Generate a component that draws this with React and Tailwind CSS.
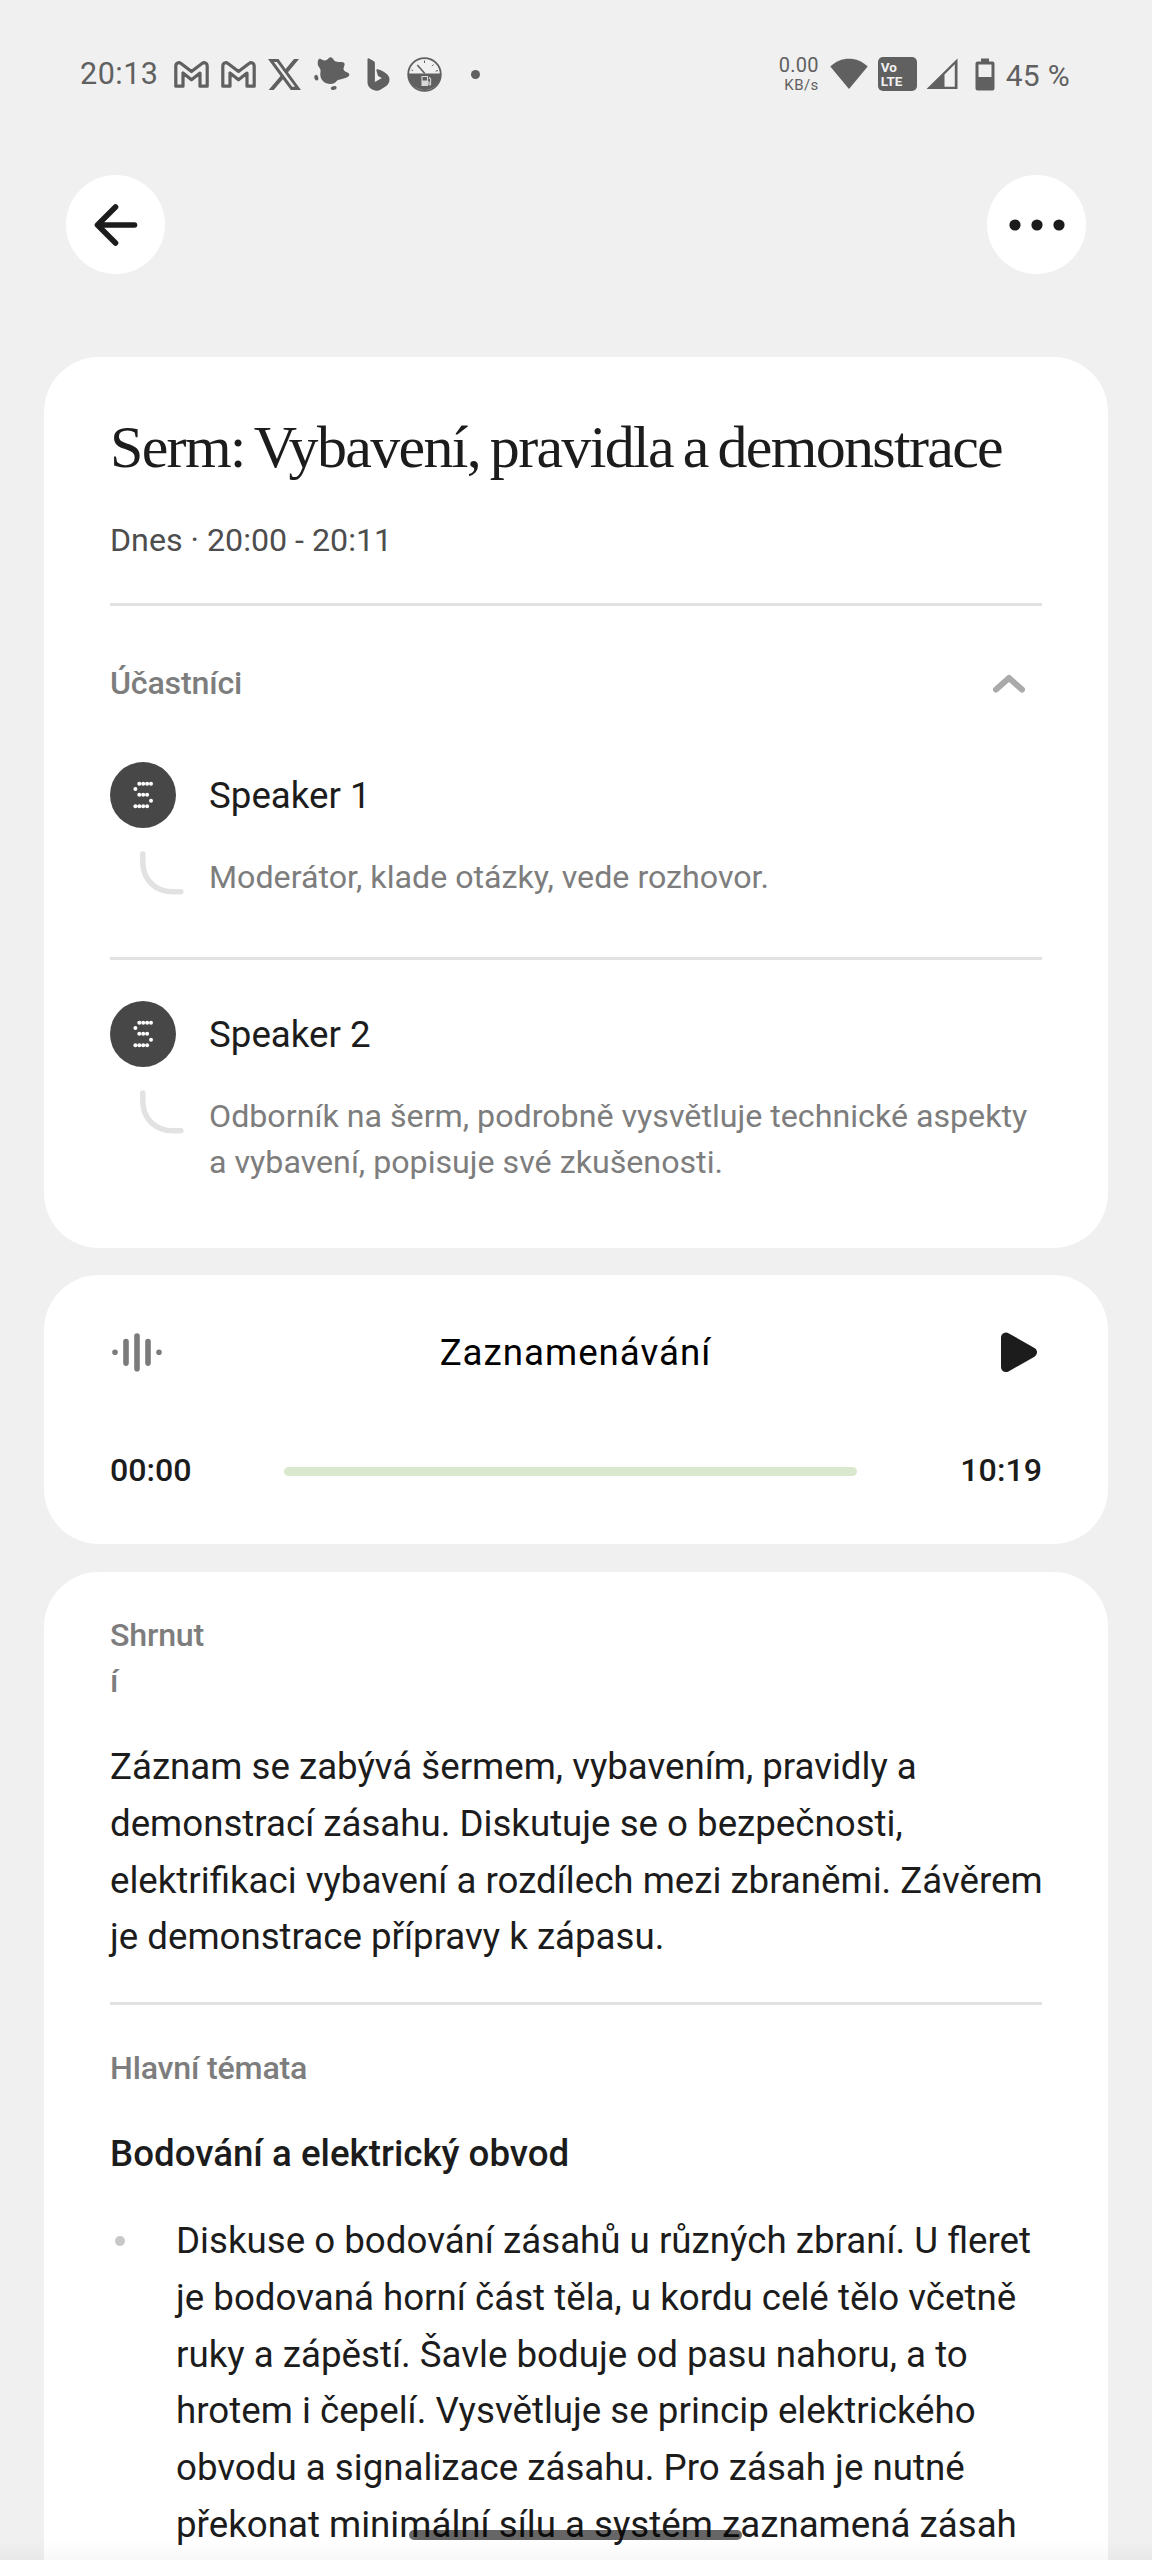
import clsx from 'clsx';

const SPEAKERS = [
  { name: 'Speaker 1', role: 'Moderátor, klade otázky, vede rozhovor.' },
  {
    name: 'Speaker 2',
    role: 'Odborník na šerm, podrobně vysvětluje technické aspekty a vybavení, popisuje své zkušenosti.'
  }
];

// Dot-matrix "S" shown inside the avatar
const AVATAR_DOTS = [
  [29.3, 21.7], [33.2, 21.7], [37.1, 21.7], [41, 21.7],
  [25.4, 27],
  [29.3, 32.7], [33.2, 32.7], [37.1, 32.7],
  [41, 38.7],
  [25.4, 44.3], [29.3, 44.3], [33.2, 44.3], [37.1, 44.3]
];

function GmailIcon({ className }) {
  return (
    <svg viewBox="0 0 35 27" className={clsx('h-[27px] w-[35px]', className)} fill="none" stroke="currentColor" strokeWidth="3.2" strokeLinejoin="round">
      <path d="M1.8 25.2V5.2C1.8 1.8 5 .9 7 2.6l10.5 8 10.5-8c2-1.7 5.2-.8 5.2 2.6v20H26V12l-8.5 6.8L9 12v13.2Z" />
    </svg>
  );
}

function XIcon({ className }) {
  return (
    <svg viewBox="0 1.15 24 21.7" preserveAspectRatio="none" className={clsx('h-[31px] w-[33px]', className)} fill="currentColor">
      <path d="M18.901 1.153h3.68l-8.04 9.19L24 22.846h-7.406l-5.8-7.584-6.638 7.584H.474l8.6-9.83L0 1.154h7.594l5.243 6.932ZM17.61 20.644h2.039L6.486 3.24H4.298Z" />
    </svg>
  );
}

function SplatIcon({ className }) {
  return (
    <svg viewBox="0 0 36 34" className={clsx('h-[34px] w-9', className)} fill="currentColor">
      <path d="M5.3 1.8C6.5 1.2 9 3.4 11 3.6 13 3.8 14.6.2 16.6.3c2.2.1 2.8 3.2 5 4.2 2.4 1 7.2-.4 8.6 1.4 1.4 1.9-1.2 4.6-.5 6.8.8 2.3 5.9 2.8 5.7 5-.2 2.4-4.8 3.4-7.5 4.2-2.4.8-4.2.7-5.2 2.1-1.4 2-3.5 3-6.2 3C10.5 27 6.3 22.8 6.3 17.5c0-2.3.5-3 .2-4.5C6.1 10.8 3.9 9.5 3.7 7 3.6 5 4 2.5 5.3 1.8Z" />
      <ellipse cx="2.3" cy="20.7" rx="1.9" ry="2.9" transform="rotate(-15 2.3 20.7)" />
      <ellipse cx="19.7" cy="31" rx="3" ry="1.9" transform="rotate(-15 19.7 31)" />
    </svg>
  );
}

function BingIcon({ className }) {
  return (
    <svg viewBox="0 0 23 33" className={clsx('h-[33px] w-[23px]', className)} fill="currentColor">
      <path d="M.5 1.3C.5.3 1.3.1 2 .5l4.6 2.6c.9.5 1.3 1.2 1.3 2.2v18.6l7-3.9-3-1.5c-.7-.4-1-.9-1.2-1.6l-1.3-4.3c-.3-1 .3-1.6 1.3-1.3C17.5 13.4 22.5 17 22.5 21.6c0 3.2-1.5 5.4-4 7l-4.7 3c-2.4 1.4-4.9 1.5-7.4.5C2.7 30.6.5 28 .5 24.5Z" />
    </svg>
  );
}

function GaugeIcon({ className }) {
  return (
    <svg viewBox="0 0 35 35" className={clsx('size-[35px]', className)} fill="none" stroke="currentColor">
      <circle cx="17.5" cy="17.5" r="16.3" strokeWidth="1.8" />
      <path d="M1.2 16.6h32.6a16.3 16.3 0 0 1-32.6 0Z" fill="currentColor" stroke="none" />
      <path d="M17.8 16.5 10.3 8" strokeWidth="1.6" />
      <path d="M17.5 3.5V6M26.5 7.5l-1.4 1.6M31 13.5l-2.3.7M4.5 13l1.6.6" strokeWidth="1" />
      <path d="M15 19.5h5.5v9H15zM22 20.5l1.6 1.6v5.2c0 1-1.6 1-1.6 0V25h-1.5" stroke="#d9d9d9" strokeWidth="1.1" />
      <path d="M15 23.5h5.5v5H15z" fill="#d9d9d9" stroke="none" />
    </svg>
  );
}

function StatusBar() {
  return (
    <div className="flex h-[148px] items-center justify-between pr-[82px] pl-[80px] text-[#606060]">
      <div className="flex items-center">
        <span className="w-[94px] text-[30.5px] leading-[36px] tracking-[0.5px]">20:13</span>
        <GmailIcon />
        <GmailIcon className="ml-3" />
        <XIcon className="ml-3" />
        <SplatIcon className="ml-[13px]" />
        <BingIcon className="ml-[17px]" />
        <GaugeIcon className="ml-[17px]" />
        <span className="ml-[29px] size-[9px] rounded-full bg-[#606060]" />
      </div>
      <div className="flex items-center">
        <div className="flex flex-col items-end">
          <span className="text-[20px] leading-[22px] tracking-[0.2px]">0.00</span>
          <span className="text-[15px] leading-[18px] tracking-[0.4px]">KB/s</span>
        </div>
        <svg viewBox="0 0 38 32" className="ml-[11px] h-8 w-[38px]" fill="currentColor">
          <path d="M.3 8.5C5.5 3.3 12 .7 19 .7s13.5 2.6 18.7 7.8L19 31Z" />
        </svg>
        <div className="ml-[10px] flex h-[34px] w-[39px] flex-col justify-center rounded-[5px] bg-[#606060] pl-[3px] text-[13.5px] leading-[14px] font-bold text-[#f0f0f0]">
          <span>Vo</span>
          <span>LTE</span>
        </div>
        <svg viewBox="0 0 32 32" className="ml-[9px] size-8" fill="currentColor">
          <path fillRule="evenodd" d="M31.5.5V31H.5ZM18.5 16.5v12.2h10.3V6.2Z" />
        </svg>
        <svg viewBox="0 0 20 33" className="ml-[17px] h-[33px] w-5" fill="currentColor">
          <path fillRule="evenodd" d="M6 .5h8v3h3.5a2 2 0 0 1 2 2v25a2 2 0 0 1-2 2h-15a2 2 0 0 1-2-2v-25a2 2 0 0 1 2-2H6ZM3.5 6.5v12.5h13V6.5Z" />
        </svg>
        <span className="ml-[11px] pt-[3px] text-[30px] leading-[36px] tracking-[0.3px]">45 %</span>
      </div>
    </div>
  );
}

function RoundButton({ label, children }) {
  return (
    <button type="button" aria-label={label} className="flex size-[99px] items-center justify-center rounded-full bg-white text-[#1c1c1c]">
      {children}
    </button>
  );
}

function TopBar() {
  return (
    <header className="flex items-center justify-between px-[66px] pt-[27px]">
      <RoundButton label="Zpět">
        <svg viewBox="0 0 44 44" className="size-11" fill="none" stroke="currentColor" strokeWidth="5.6" strokeLinecap="round" strokeLinejoin="round">
          <path d="M40.5 22H4M21.5 4 3.5 22l18 18" />
        </svg>
      </RoundButton>
      <RoundButton label="Další možnosti">
        <svg viewBox="0 0 56 12" className="h-3 w-14" fill="currentColor">
          <circle cx="6" cy="6" r="5.6" />
          <circle cx="28" cy="6" r="5.6" />
          <circle cx="50" cy="6" r="5.6" />
        </svg>
      </RoundButton>
    </header>
  );
}

function Card({ className, children }) {
  return <section className={clsx('rounded-[55px] bg-white px-[66px]', className)}>{children}</section>;
}

function Divider({ className }) {
  return <div className={clsx('h-[3px] bg-[#e2e2e2]', className)} />;
}

function SectionLabel({ className, children }) {
  return (
    <h2 className={clsx('text-[32.2px] leading-[46.4px] font-medium tracking-[-0.2px] text-[#7d7d7d]', className)}>
      {children}
    </h2>
  );
}

function Speaker({ name, role }) {
  return (
    <div>
      <div className="flex items-center gap-[33px]">
        <svg viewBox="0 0 66 66" className="size-[66px]">
          <circle cx="33" cy="33" r="33" fill="#474747" />
          {AVATAR_DOTS.map(([x, y]) => (
            <circle key={`${x}-${y}`} cx={x} cy={y} r="2" fill="#fff" />
          ))}
        </svg>
        <span className="pt-[2px] text-[36.7px] leading-[52px] text-[#1c1c1c]">{name}</span>
      </div>
      <div className="flex pt-[22px]">
        <svg viewBox="0 0 99 46" className="h-[46px] w-[99px] shrink-0" fill="none" stroke="#e2e2e2" strokeWidth="5.5" strokeLinecap="round">
          <path d="M32.8 4v8c0 18 13 29.8 30.5 29.8h7.5" />
        </svg>
        <p className="pt-1 pb-px text-[32.2px] leading-[46.4px] text-[#7d7d7d]">{role}</p>
      </div>
    </div>
  );
}

function MeetingCard() {
  return (
    <Card className="mt-[83px] h-[891px] pt-[57px]">
      <h1 className="font-['Liberation_Serif',serif] text-[60px] leading-[66px] tracking-[-1.7px] whitespace-nowrap text-[#1c1c1c] [word-spacing:-3.4px]">
        Serm: Vybavení, pravidla a demonstrace
      </h1>
      <p className="mt-[37px] text-[32.2px] leading-[46px] text-[#4d4d4d]">Dnes · 20:00 - 20:11</p>
      <Divider className="mt-10" />
      <div className="mt-[54px] flex h-[46px] items-center justify-between pr-4">
        <SectionLabel>Účastníci</SectionLabel>
        <svg viewBox="0 0 34 22" className="h-[22px] w-[34px]" fill="none" stroke="#aaaaaa" strokeWidth="6" strokeLinecap="round" strokeLinejoin="round">
          <path d="M4 17.5 17 6l13 11.5" />
        </svg>
      </div>
      <div className="mt-14">
        <Speaker {...SPEAKERS[0]} />
        <Divider className="mt-[55.6px] mb-[41px]" />
        <Speaker {...SPEAKERS[1]} />
      </div>
    </Card>
  );
}

function PlayerCard() {
  return (
    <Card className="mt-[27px] h-[269px] pt-[51px]">
      <div className="flex h-[52px] items-center justify-between">
        <svg viewBox="0 0 54 54" className="size-[54px]" fill="none" stroke="#7b7b7b" strokeWidth="5.6" strokeLinecap="round">
          <path d="M5 27.3h.01M16 16.5v21.6M27 11v32.7M38 16.5v21.6M49 27.3h.01" />
        </svg>
        <span className="pt-[2px] pr-px text-[36.7px] leading-[52px] tracking-[1px] text-black">Zaznamenávání</span>
        <svg viewBox="0 0 54 54" className="size-[54px]" fill="#1c1c1c" stroke="#1c1c1c" strokeWidth="10" strokeLinejoin="round">
          <path d="M18 12.5v29.6l26-14.8Z" />
        </svg>
      </div>
      <div className="mt-[69px] flex items-center text-[32.2px] leading-[46px] font-medium text-[#1c1c1c]">
        <span className="w-[174px]">00:00</span>
        <div className="mt-[3px] h-[9px] w-[573px] rounded-full bg-[#dae8cd]" />
        <span className="ml-auto">10:19</span>
      </div>
    </Card>
  );
}

function SummaryCard() {
  return (
    <Card className="mt-7 h-[1100px] pt-10">
      <SectionLabel className="w-[98px] break-all">Shrnutí</SectionLabel>
      <p className="-mr-2 mt-[34.5px] text-[36.66px] leading-[56.667px] text-[#1c1c1c]">
        Záznam se zabývá šermem, vybavením, pravidly a demonstrací zásahu. Diskutuje se o bezpečnosti, elektrifikaci
        vybavení a rozdílech mezi zbraněmi. Závěrem je demonstrace přípravy k zápasu.
      </p>
      <Divider className="mt-9" />
      <SectionLabel className="mt-10">Hlavní témata</SectionLabel>
      <h3 className="mt-[35px] text-[36.7px] leading-[56px] font-medium text-[#1c1c1c]">Bodování a elektrický obvod</h3>
      <ul className="mt-[31px]">
        <li className="flex">
          <span className="mt-[23px] ml-[5px] size-[10px] shrink-0 rounded-full bg-[#c8c8c8]" />
          <p className="ml-[51px] text-[36.7px] leading-[56.667px] text-[#1c1c1c]">
            Diskuse o bodování zásahů u různých zbraní. U fleret je bodovaná horní část těla, u kordu celé tělo včetně
            ruky a zápěstí. Šavle boduje od pasu nahoru, a to hrotem i čepelí. Vysvětluje se princip elektrického obvodu
            a signalizace zásahu. Pro zásah je nutné překonat minimální sílu a systém zaznamená zásah
          </p>
        </li>
      </ul>
    </Card>
  );
}

export default function App() {
  return (
    <div className="relative h-[2560px] w-[1152px] overflow-hidden bg-[#f0f0f0] font-[Roboto,sans-serif]">
      <StatusBar />
      <TopBar />
      <main className="px-11">
        <MeetingCard />
        <PlayerCard />
        <SummaryCard />
      </main>
      <div className="absolute inset-x-0 bottom-0 h-5 bg-gradient-to-b from-black/0 to-black/3" />
      <div className="absolute bottom-5 left-[409px] h-[10px] w-[333px] rounded-full bg-black/60" />
    </div>
  );
}
